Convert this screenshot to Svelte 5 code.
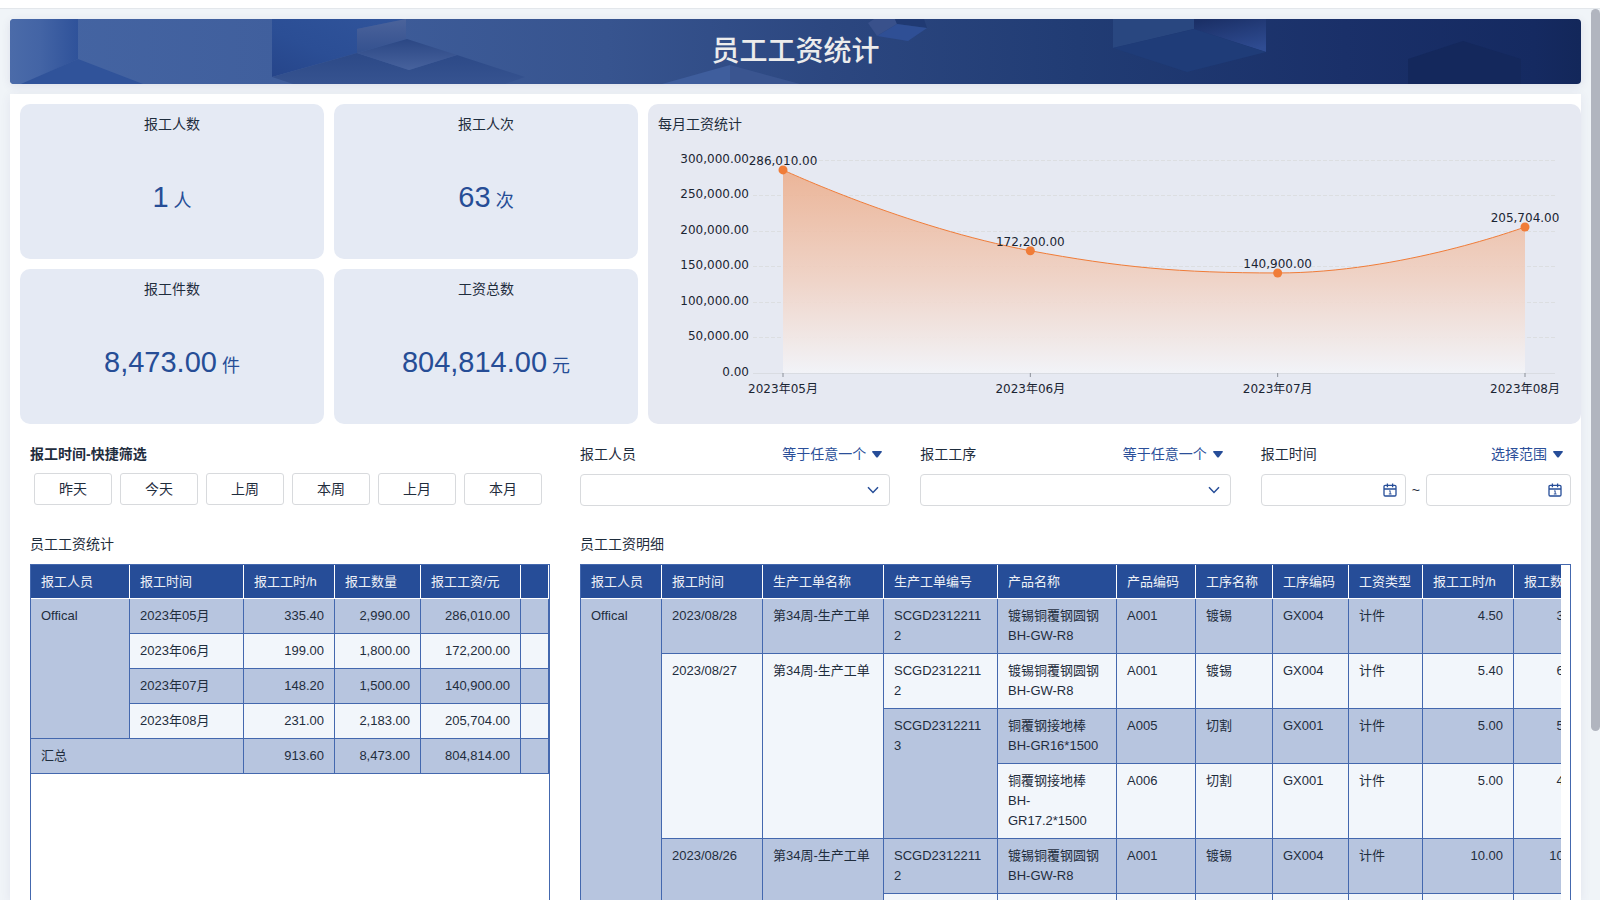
<script>
  const stats = [
    { label: '报工人数', value: '1', unit: '人' },
    { label: '报工人次', value: '63', unit: '次' },
    { label: '报工件数', value: '8,473.00', unit: '件' },
    { label: '工资总数', value: '804,814.00', unit: '元' }
  ];

  const quick = ['昨天', '今天', '上周', '本周', '上月', '本月'];

  const months = [
    { name: '2023年05月', hours: '335.40', qty: '2,990.00', wage: 286010 },
    { name: '2023年06月', hours: '199.00', qty: '1,800.00', wage: 172200 },
    { name: '2023年07月', hours: '148.20', qty: '1,500.00', wage: 140900 },
    { name: '2023年08月', hours: '231.00', qty: '2,183.00', wage: 205704 }
  ];

  const money = (n) => n.toLocaleString('en-US', { minimumFractionDigits: 2 });

  const detailHeads = ['报工人员', '报工时间', '生产工单名称', '生产工单编号', '产品名称', '产品编码', '工序名称', '工序编码', '工资类型', '报工工时/h', '报工数量'];
  const detailWidths = [81, 101, 121, 114, 119, 79, 77, 76, 74, 91, 86];

  // each row lists [text, rowspan, numeric]
  const detailRows = [
    [['Offical', 6], ['2023/08/28'], ['第34周-生产工单'], ['SCGD23122112'], ['镀锡铜覆钢圆钢 BH-GW-R8'], ['A001'], ['镀锡'], ['GX004'], ['计件'], ['4.50', 1, true], ['30.00', 1, true]],
    [['2023/08/27', 3], ['第34周-生产工单', 3], ['SCGD23122112'], ['镀锡铜覆钢圆钢 BH-GW-R8'], ['A001'], ['镀锡'], ['GX004'], ['计件'], ['5.40', 1, true], ['60.00', 1, true]],
    [['SCGD23122113', 2], ['铜覆钢接地棒 BH-GR16*1500'], ['A005'], ['切割'], ['GX001'], ['计件'], ['5.00', 1, true], ['50.00', 1, true]],
    [['铜覆钢接地棒 BH-GR17.2*1500'], ['A006'], ['切割'], ['GX001'], ['计件'], ['5.00', 1, true], ['40.00', 1, true]],
    [['2023/08/26', 2], ['第34周-生产工单', 2], ['SCGD23122112'], ['镀锡铜覆钢圆钢 BH-GW-R8'], ['A001'], ['镀锡'], ['GX004'], ['计件'], ['10.00', 1, true], ['100.00', 1, true]],
    [[''], [''], [''], [''], [''], [''], [''], ['']]
  ];

  // chart geometry
  let chartWidth = $state(933);
  const top = 26;
  const bottom = 239;
  const left = 105;
  const max = 300000;
  const ticks = [300000, 250000, 200000, 150000, 100000, 50000, 0];
  const yOf = (v) => bottom - ((bottom - top) * v) / max;
  let right = $derived(chartWidth - 26);
  let step = $derived((right - left - 60) / (months.length - 1));
  let points = $derived(months.map((m, i) => ({ x: left + 30 + i * step, y: yOf(m.wage), label: money(m.wage), name: m.name })));
  let line = $derived.by(() => {
    const [a, b, c, d] = points;
    const h = step / 2;
    return `M${a.x} ${a.y}C${a.x} ${a.y} ${b.x - h} ${b.y - 23} ${b.x} ${b.y}C${b.x + step * 0.36} ${b.y + 16.5} ${c.x - step * 0.4} ${c.y} ${c.x} ${c.y}C${c.x + h} ${c.y} ${d.x} ${d.y} ${d.x} ${d.y}`;
  });
  let area = $derived(`${line}L${points[3].x} ${bottom}L${points[0].x} ${bottom}Z`);
</script>

{#snippet calendar()}
  <svg class="cal" viewBox="0 0 14 14" width="14" height="14" aria-hidden="true">
    <rect x="1" y="2.3" width="12" height="10.7" rx="1.2" />
    <path d="M1 6H13M4.4 .6V4.2M9.6 .6V4.2" />
    <path class="thin" d="M6 8.2L7.2 7.7V11M5.8 11H8.6" />
  </svg>
{/snippet}

{#snippet mode(text)}
  <button class="mode" type="button">
    {text}
    <svg viewBox="0 0 10 7" width="10" height="7" aria-hidden="true"><path d="M.8 0H9.2Q10.4 .2 9.6 1.3L6 6Q5 7 4 6L.4 1.3Q-.4 .2 .8 0Z" /></svg>
  </button>
{/snippet}

{#snippet picker(id, text)}
  <div class="field">
    <div class="field-head"><label for={id}>{text}</label>{@render mode('等于任意一个')}</div>
    <div class="control">
      <select {id}><option value=""></option></select>
      <svg class="chev" viewBox="0 0 12 8" width="12" height="8" aria-hidden="true"><path d="M1 1.2L6 6.4L11 1.2" /></svg>
    </div>
  </div>
{/snippet}

<div class="app">
  <div class="topbar"></div>
  <main>
    <header class="banner">
      <svg class="deco" viewBox="0 0 1571 65" preserveAspectRatio="none" aria-hidden="true">
        <defs>
          <linearGradient id="g1"><stop offset="0" stop-color="#4b6ba9" /><stop offset=".45" stop-color="#4364a5" /><stop offset="1" stop-color="#2f529a" /></linearGradient>
          <linearGradient id="g2" x1="0" y1="1" x2="1" y2="0"><stop offset="0" stop-color="#26458a" /><stop offset=".4" stop-color="#2b4e95" /><stop offset="1" stop-color="#30549b" /></linearGradient>
          <linearGradient id="g3" x1="0" y1="0" x2="0" y2="1"><stop offset="0" stop-color="#4b639b" /><stop offset="1" stop-color="#34518f" /></linearGradient>
          <linearGradient id="g4" x1="0" y1="0" x2="0" y2="1"><stop offset="0" stop-color="#2b4784" /><stop offset="1" stop-color="#47629d" /></linearGradient>
          <linearGradient id="g5" x1="0" y1="0" x2="0" y2="1"><stop offset="0" stop-color="#2c4987" /><stop offset="1" stop-color="#365390" /></linearGradient>
          <linearGradient id="g6" x1=".2" y1="0" x2=".7" y2="1"><stop offset="0" stop-color="#1b3067" /><stop offset="1" stop-color="#2f4c92" /></linearGradient>
        </defs>
        <path fill="url(#g1)" d="M0 0H68V40L11 65H0Z" />
        <path fill="#30539a" d="M11 65L68 40L133 65Z" />
        <path fill="url(#g2)" d="M262 0H396L347 10V34L262 58Z" />
        <path fill="url(#g5)" d="M262 58L347 34L399 51L447 36L515 58L495 65H283Z" />
        <path fill="url(#g3)" d="M347 10L396 0V20L347 34Z" />
        <path fill="url(#g4)" d="M347 34L397 20L447 36L399 51Z" />
        <path fill="#3f5e9d" d="M652 65L720 46V65Z" />
        <path fill="#3a5590" d="M720 46L790 65H720Z" />
        <path fill="#39518b" d="M858 4L864 0H885L887 5L867 17Z" />
        <path fill="#203a73" d="M885 0H914L917 9L887 5Z" />
        <path fill="#2f4f95" d="M887 5L917 9L898 22L867 17Z" />
        <path fill="#294780" d="M1103 0H1184V10L1103 29Z" />
        <path fill="url(#g6)" d="M1184 0H1256V33L1184 10Z" />
        <path fill="#1f3c78" d="M1103 29L1184 10L1256 33L1177 53Z" />
        <path fill="#14285c" d="M1398 65V40L1453 22L1511 40V65Z" />
      </svg>
      <h1>员工工资统计</h1>
    </header>

    <div class="panel">
      <section class="overview">
        {#each stats as s}
          <article class="card stat">
            <h2>{s.label}</h2>
            <p><span class="num">{s.value}</span><span class="unit">{s.unit}</span></p>
          </article>
        {/each}
        <article class="card chart">
          <h2>每月工资统计</h2>
          <div class="plot" bind:clientWidth={chartWidth}>
            <svg width={chartWidth} height="275">
              <defs>
                <linearGradient id="fill" gradientUnits="userSpaceOnUse" x1="0" y1={points[0].y} x2="0" y2={bottom}>
                  <stop offset="0" stop-color="#ecaf8e" />
                  <stop offset=".55" stop-color="#f0d2c4" />
                  <stop offset="1" stop-color="#f3f4f8" />
                </linearGradient>
              </defs>
              {#each ticks as t}
                {#if t}
                  <line class="grid" x1={left} x2={right} y1={Math.floor(yOf(t)) + 0.5} y2={Math.floor(yOf(t)) + 0.5} />
                {/if}
                <text class="lbl" x={left - 4} y={Math.floor(yOf(t)) + 3} text-anchor="end">{money(t)}</text>
              {/each}
              <path class="area" d={area} fill="url(#fill)" />
              <line class="axis" x1={left} x2={right} y1={bottom + 0.5} y2={bottom + 0.5} />
              <path class="curve" d={line} />
              {#each points as p}
                <line class="tick" x1={p.x} x2={p.x} y1={bottom} y2={bottom + 4} />
                <circle cx={p.x} cy={p.y} r="4.5" />
                <text class="lbl" x={p.x} y={p.y - 5} text-anchor="middle">{p.label}</text>
                <text class="lbl" x={p.x} y={bottom + 20} text-anchor="middle">{p.name}</text>
              {/each}
            </svg>
          </div>
        </article>
      </section>

      <section class="split">
        <div>
          <h3>报工时间-快捷筛选</h3>
          <div class="quick">
            {#each quick as q}<button type="button">{q}</button>{/each}
          </div>
        </div>
        <div class="fields">
          {@render picker('worker', '报工人员')}
          {@render picker('process', '报工工序')}
          <div class="field">
            <div class="field-head"><label for="from">报工时间</label>{@render mode('选择范围')}</div>
            <div class="range">
              <div class="control"><input id="from" type="text" />{@render calendar()}</div>
              <span>~</span>
              <div class="control"><input type="text" aria-label="报工时间" />{@render calendar()}</div>
            </div>
          </div>
        </div>
      </section>

      <section class="split tables">
        <div class="block">
          <h4>员工工资统计</h4>
          <div class="frame">
            <table class="summary">
              <colgroup><col style="width:99px" /><col style="width:114px" /><col style="width:91px" /><col style="width:86px" /><col style="width:100px" /><col /></colgroup>
              <thead>
                <tr><th>报工人员</th><th>报工时间</th><th>报工工时/h</th><th>报工数量</th><th>报工工资/元</th><th></th></tr>
              </thead>
              <tbody>
                {#each months as m, i}
                  <tr class:odd={i % 2 === 0}>
                    {#if i === 0}<td rowspan="4">Offical</td>{/if}
                    <td>{m.name}</td>
                    <td class="n">{m.hours}</td>
                    <td class="n">{m.qty}</td>
                    <td class="n">{money(m.wage)}</td>
                    <td></td>
                  </tr>
                {/each}
                <tr class="odd"><td colspan="2">汇总</td><td class="n">913.60</td><td class="n">8,473.00</td><td class="n">804,814.00</td><td></td></tr>
              </tbody>
            </table>
          </div>
        </div>
        <div class="block">
          <h4>员工工资明细</h4>
          <div class="frame inset">
            <div class="clip">
              <table class="detail">
                <colgroup>{#each detailWidths as w}<col style="width:{w}px" />{/each}</colgroup>
                <thead><tr>{#each detailHeads as h}<th>{h}</th>{/each}</tr></thead>
                <tbody>
                  {#each detailRows as row, i}
                    <tr class:odd={i % 2 === 0}>
                      {#each row as [text, span, numeric]}
                        <td rowspan={span ?? 1} class:n={numeric}>{text}</td>
                      {/each}
                    </tr>
                  {/each}
                </tbody>
              </table>
            </div>
          </div>
        </div>
      </section>
    </div>
  </main>
  <div class="scroll"></div>
</div>

<style>
  :global(body) {
    margin: 0;
  }
  .app {
    position: relative;
    display: flex;
    flex-direction: column;
    height: 100vh;
    overflow: hidden;
    background: #f0f4f8;
    color: #1f2d3d;
    font: 14px/20px 'Liberation Sans', 'Noto Sans CJK SC', sans-serif;
  }
  .app *,
  .app {
    box-sizing: border-box;
  }
  h1, h2, h3, h4, p {
    margin: 0;
    font-weight: 400;
    font-size: 14px;
  }
  button, input, select {
    font: inherit;
    color: inherit;
  }
  .topbar {
    flex: none;
    height: 9px;
    background: #fff;
    border-bottom: 1px solid #e3e7eb;
  }
  main {
    flex: 1;
    min-height: 0;
    display: flex;
    flex-direction: column;
    gap: 10px;
    padding: 10px 19px 0 10px;
  }
  .banner {
    position: relative;
    flex: none;
    display: flex;
    align-items: center;
    justify-content: center;
    height: 65px;
    border-radius: 4px;
    overflow: hidden;
    background: linear-gradient(90deg, #4565a3 0, #405f9d 17%, #37548f 38%, #2c4780 52%, #213c74 68%, #1a3069 85%, #152a61 97%, #13275a 100%);
    box-shadow: 0 2px 10px rgba(60, 50, 110, 0.1);
  }
  .deco {
    position: absolute;
    inset: 0;
    width: 100%;
    height: 100%;
  }
  h1 {
    position: relative;
    font-size: 28px;
    line-height: 40px;
    font-weight: 500;
    color: #ececec;
  }
  .panel {
    flex: 1;
    min-height: 0;
    display: flex;
    flex-direction: column;
    padding-top: 10px;
    background: #fff;
    box-shadow: 0 2px 10px rgba(60, 50, 110, 0.08);
  }
  .overview {
    display: grid;
    grid-template-columns: 304fr 304fr 933fr;
    grid-template-rows: 155px 155px;
    gap: 10px;
    padding-left: 10px;
  }
  .card {
    min-width: 0;
    padding-top: 10px;
    border-radius: 10px;
    background: #e5eaf4;
  }
  .stat {
    display: flex;
    flex-direction: column;
    text-align: center;
  }
  .stat p {
    flex: 1;
    display: flex;
    align-items: baseline;
    justify-content: center;
    gap: 5px;
    padding-top: 43px;
    line-height: 40px;
    color: #264d96;
  }
  .num {
    font-size: 29px;
  }
  .unit {
    font-size: 18px;
  }
  .chart {
    grid-column: 3;
    grid-row: 1 / span 2;
    background: #e6e9f2;
  }
  .chart h2 {
    padding-left: 10px;
  }
  .plot {
    height: 275px;
    overflow: hidden;
  }
  .plot svg {
    display: block;
  }
  .lbl {
    font: 12px 'DejaVu Sans', 'Noto Sans CJK SC', sans-serif;
    fill: #1b2533;
  }
  .grid {
    stroke: #dcdee1;
    stroke-dasharray: 4 2;
  }
  .area {
    opacity: 0.9;
  }
  .axis {
    stroke: #d9dce2;
  }
  .tick {
    stroke: #8b9099;
  }
  .curve {
    fill: none;
    stroke: #f07c38;
  }
  circle {
    fill: #f07c38;
  }
  .split {
    display: grid;
    grid-template-columns: 520fr 991fr;
    gap: 30px;
    padding: 20px 10px 0 20px;
  }
  .split > * {
    min-width: 0;
  }
  h3 {
    font-weight: 700;
  }
  .quick {
    display: flex;
    gap: 8px;
    padding: 9px 8px 0 4px;
  }
  .quick button {
    flex: 1;
    height: 32px;
    padding: 0;
    border: 1px solid #d8dadd;
    border-radius: 3px;
    background: #fff;
  }
  .fields {
    display: grid;
    grid-template-columns: repeat(3, 1fr);
    gap: 30px;
  }
  .field-head {
    display: flex;
    justify-content: space-between;
    padding-right: 8px;
    margin-bottom: 10px;
  }
  .mode {
    display: flex;
    align-items: center;
    gap: 6px;
    padding: 0;
    border: 0;
    background: none;
    color: #2b4f99;
  }
  .mode svg {
    fill: #264d98;
  }
  .control {
    position: relative;
    flex: 1;
    min-width: 0;
  }
  select, input {
    display: block;
    width: 100%;
    height: 32px;
    padding: 0 30px 0 10px;
    border: 1px solid #d8dadd;
    border-radius: 4px;
    background: #fff;
    appearance: none;
  }
  .chev {
    position: absolute;
    right: 11px;
    top: 12px;
    fill: none;
    stroke: #264d98;
    stroke-width: 1.5;
  }
  .cal {
    position: absolute;
    right: 9px;
    top: 9px;
    fill: none;
    stroke: #264d98;
    stroke-width: 1.3;
  }
  .thin {
    stroke-width: 0.9;
  }
  .range {
    display: flex;
    align-items: center;
  }
  .range span {
    width: 20px;
    text-align: center;
  }
  .tables {
    flex: 1;
    min-height: 0;
    padding-top: 28px;
  }
  .block {
    display: flex;
    flex-direction: column;
    gap: 10px;
    min-height: 0;
  }
  .frame {
    flex: 1;
    min-height: 0;
    overflow: hidden;
    border: 1px solid #4468ae;
    border-bottom: 0;
  }
  .inset {
    padding-right: 9px;
  }
  .clip {
    height: 100%;
    overflow: hidden;
  }
  table {
    table-layout: fixed;
    width: 100%;
    border-collapse: separate;
    border-spacing: 0;
    font-size: 13px;
  }
  .detail {
    width: 1019px;
  }
  th {
    height: 34px;
    padding: 0 0 0 10px;
    border-right: 1px solid #fff;
    border-bottom: 1px solid #fff;
    background: #264d98;
    color: #eef1f7;
    font-weight: 400;
    text-align: left;
    white-space: nowrap;
  }
  td {
    height: 35px;
    padding: 7px 10px;
    border-right: 1px solid #4468ae;
    border-bottom: 1px solid #4468ae;
    background: #f2f6fb;
    vertical-align: top;
    overflow-wrap: anywhere;
  }
  .odd td {
    background: #b7c5df;
  }
  .n {
    text-align: right;
  }
  .scroll {
    position: absolute;
    top: 9px;
    right: 0;
    width: 9px;
    height: calc((100% - 9px) * 0.81);
    border-radius: 5px;
    background: #b1b5bf;
  }
</style>
